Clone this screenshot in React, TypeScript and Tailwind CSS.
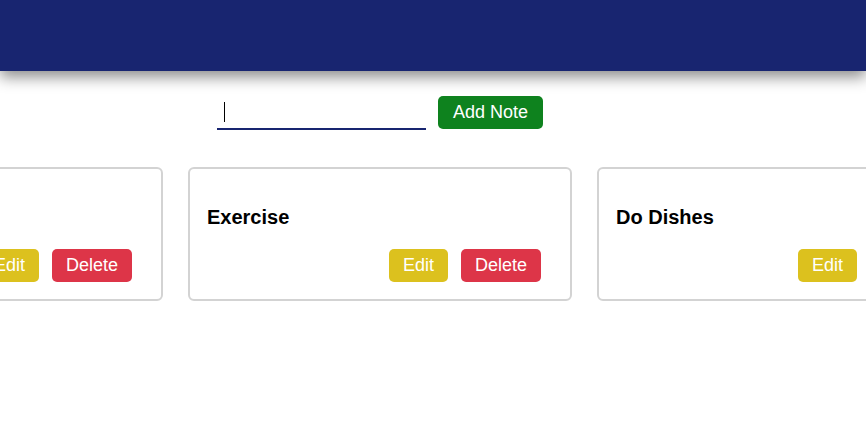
import React from "react";

const notes = ["Groceries", "Exercise", "Do Dishes"];

function NoteCard({ title }: { title: string }) {
  return (
    <div className="w-[384px] shrink-0 rounded-[6px] border-2 border-[#d3d3d3] bg-white px-4 pb-[17px] pt-4">
      <h2 className="mt-[21px] pl-[1px] text-[20px] font-bold leading-[23px] text-black">{title}</h2>
      <div className="mt-[20px] flex justify-end gap-[13px] pr-[13px]">
        <button className="h-[33px] rounded-[5px] bg-[#dcc11e] px-[14px] text-[18px] text-white">Edit</button>
        <button className="h-[33px] rounded-[5px] bg-[#dd3548] px-[14px] text-[18px] text-white">Delete</button>
      </div>
    </div>
  );
}

export default function App() {
  return (
    <div
      className="min-h-[426px] w-full overflow-hidden bg-white"
      style={{ fontFamily: '"Liberation Sans", Arial, sans-serif' }}
    >
      <header className="relative z-10 h-[71px] w-full bg-[#182570] shadow-[0_6px_14px_rgba(0,0,0,0.45)]" />
      <div className="w-[760px]">
        <div className="mt-[25px] flex items-start justify-center gap-[12px]">
          <div className="relative mt-[2px]">
            <input
              autoFocus
              aria-label="note"
              className="h-[32px] w-[209px] border-b-2 border-[#182570] bg-transparent px-[6px] text-[16px] text-black caret-transparent outline-none"
            />
            <span className="pointer-events-none absolute left-[7px] top-[4px] h-[20px] w-px bg-black" />
          </div>
          <button className="h-[33px] rounded-[5px] bg-[#0e821e] px-[15px] text-[18px] text-white">Add Note</button>
        </div>
        <div className="mt-[37px] flex justify-center gap-[25px]">
          {notes.map((n) => (
            <NoteCard key={n} title={n} />
          ))}
        </div>
      </div>
    </div>
  );
}
